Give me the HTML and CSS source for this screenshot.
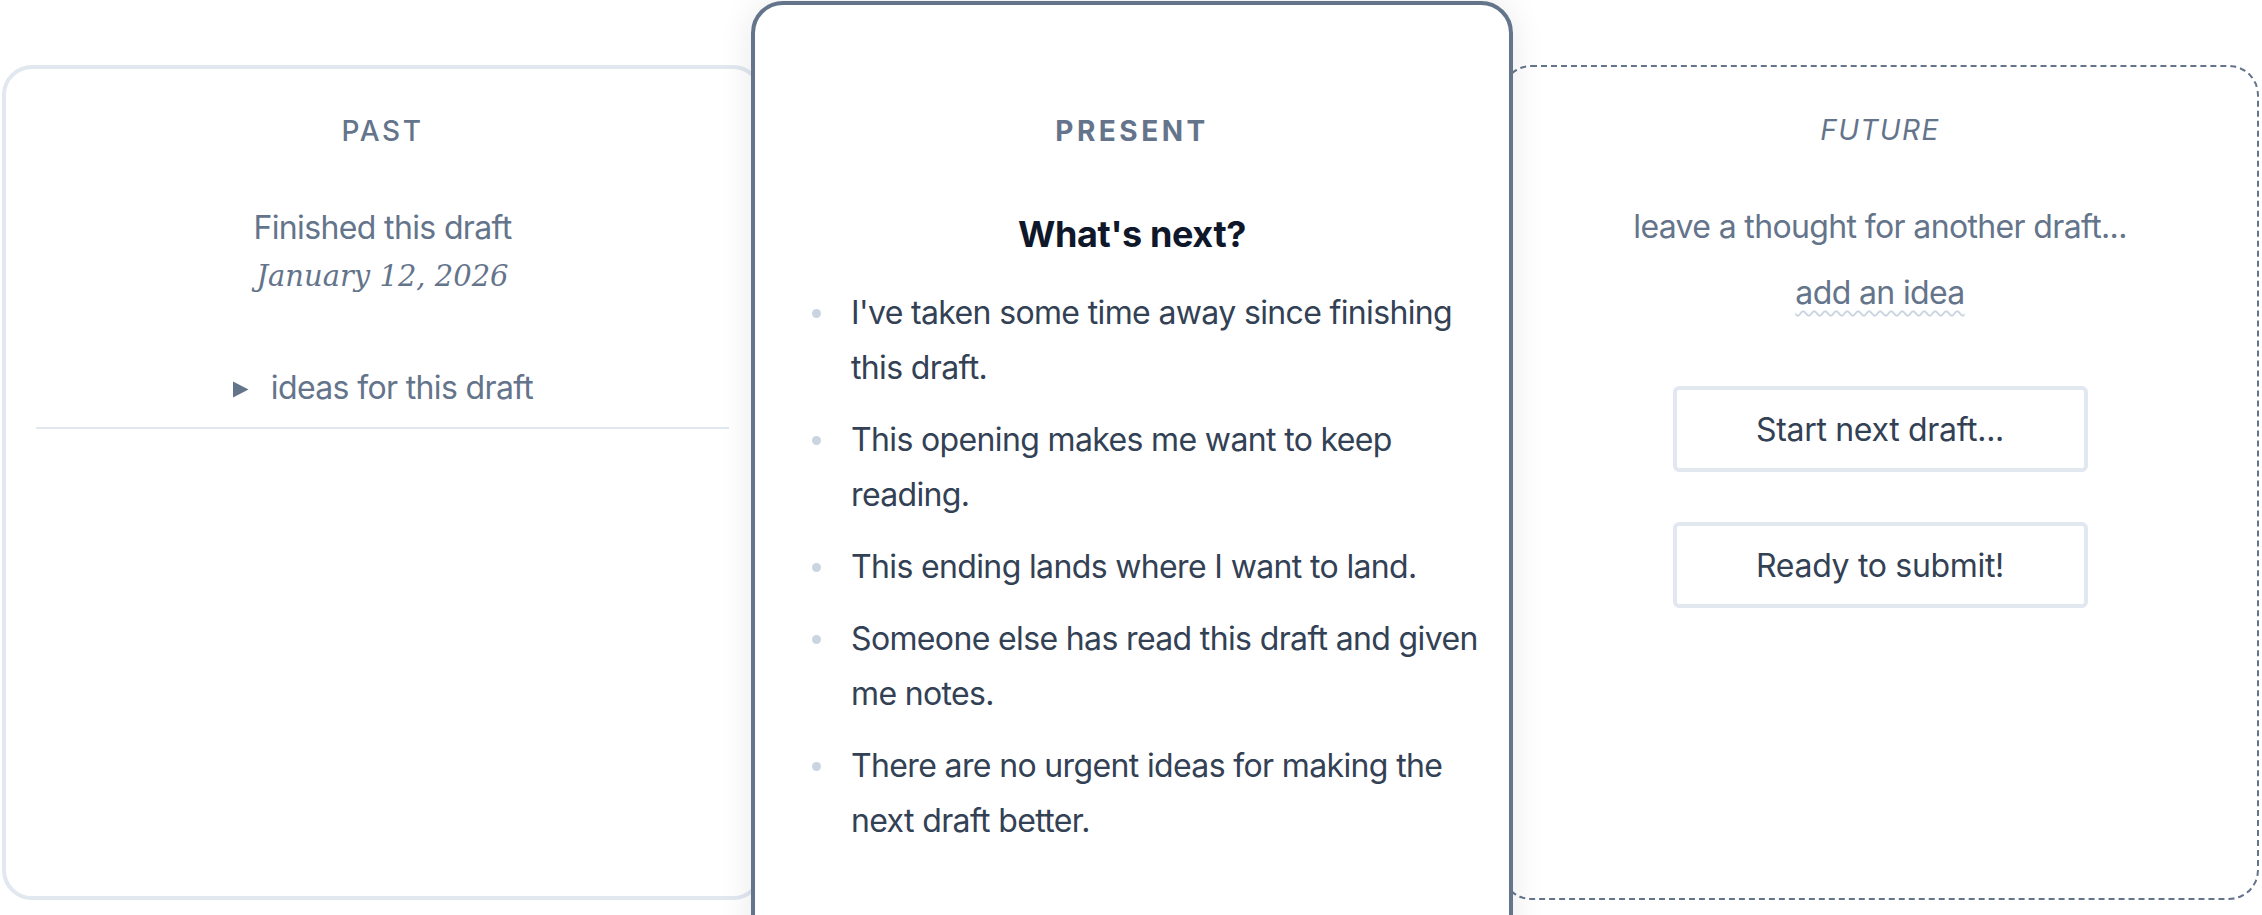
FILE: index.html
```html
<!DOCTYPE html>
<html lang="en">
<head>
<meta charset="utf-8">
<title>Draft timeline</title>
<link rel="stylesheet" href="styles.css">
</head>
<body>
<main class="board">
  <section class="card card-past">
    <h2 class="card-title title-past">PAST</h2>
    <p class="meta">Finished this draft</p>
    <p class="date">January 12, 2026</p>
    <details class="ideas">
      <summary><svg class="tri" width="17" height="17" viewBox="0 0 17 17"><path d="M1 0.5 L16.5 8.5 L1 16.5 Z" fill="#64748b"/></svg><span>ideas for this draft</span></summary>
    </details>
  </section>

  <section class="card card-present">
    <h2 class="card-title title-present">PRESENT</h2>
    <h3 class="next-heading">What's next?</h3>
    <ul class="checklist">
      <li>I've taken some time away since finishing this draft.</li>
      <li>This opening makes me want to keep reading.</li>
      <li>This ending lands where I want to land.</li>
      <li>Someone else has read this draft and given me notes.</li>
      <li>There are no urgent ideas for making the next draft better.</li>
    </ul>
  </section>

  <section class="card card-future">
    <h2 class="card-title title-future">FUTURE</h2>
    <p class="meta">leave a thought for another draft...</p>
    <a class="add-idea" href="#">add an idea</a>
    <div class="actions">
      <button class="btn" type="button">Start next draft...</button>
      <button class="btn" type="button">Ready to submit!</button>
    </div>
  </section>
</main>
</body>
</html>
```

FILE: styles.css
```css
* { box-sizing: border-box; }

html, body {
  margin: 0;
  padding: 0;
  background: #ffffff;
  overflow: hidden;
}

body {
  font-family: Inter, "Noto Sans", "Liberation Sans", sans-serif;
  color: #334155;
  width: 2262px;
  height: 915px;
}

.board {
  display: flex;
  align-items: flex-start;
  padding: 65px 0 0 2px;
}

.card {
  flex: none;
  background: #ffffff;
  text-align: center;
  display: flex;
  flex-direction: column;
  align-items: center;
}

.card-past {
  width: 761px;
  height: 835px;
  border: 4px solid #e2e8f0;
  border-radius: 30px;
  padding: 42px 30px 0;
  align-items: stretch;
}

.card-present {
  position: relative;
  z-index: 2;
  width: 762px;
  margin: -64px -12px 0;
  height: 1000px;
  border: 4px solid #64748b;
  border-radius: 32px;
  padding: 106px 30px 0;
  box-shadow: 0 0 34px rgba(15, 23, 42, 0.09);
  align-items: stretch;
}

.card-future {
  width: 758px;
  height: 835px;
  border: 2px dashed #64748b;
  border-radius: 30px;
  padding: 43px 30px 0;
}

.card-title {
  margin: 0;
  font-size: 28px;
  line-height: 40px;
  color: #64748b;
  letter-spacing: 0.1em;
}

.title-past { font-weight: 500; letter-spacing: 0.09em; }
.title-present { font-weight: 700; letter-spacing: 0.125em; }
.title-future { font-weight: 400; font-style: italic; letter-spacing: 0.05em; }

.meta {
  margin: 53px 0 0;
  font-size: 32px;
  line-height: 48px;
  letter-spacing: -0.02em;
  color: #64748b;
}

.date {
  margin: 0;
  font-family: "DejaVu Serif", "Liberation Serif", serif;
  font-style: italic;
  font-size: 29px;
  line-height: 48px;
  color: #64748b;
}

.ideas {
  margin-top: 64px;
  padding-bottom: 15px;
  border-bottom: 2px solid #e2e8f0;
}

.ideas summary {
  list-style: none;
  display: flex;
  justify-content: center;
  align-items: center;
  gap: 22px;
  font-size: 32px;
  line-height: 48px;
  letter-spacing: -0.02em;
  color: #64748b;
  cursor: pointer;
}

.ideas summary::-webkit-details-marker { display: none; }

.tri { flex: none; margin-top: 2px; }

.next-heading {
  margin: 59px 0 0;
  font-size: 36px;
  line-height: 48px;
  font-weight: 700;
  letter-spacing: -0.01em;
  color: #0f172a;
}

.checklist {
  list-style: none;
  margin: 28px -12px 0 0;
  padding: 0 0 0 27px;
  text-align: left;
}

.checklist li {
  display: flex;
  align-items: flex-start;
  font-size: 32px;
  line-height: 54.8px;
  letter-spacing: -0.02em;
  color: #334155;
  margin-bottom: 17.4px;
}

.checklist li::before {
  content: "";
  flex: none;
  width: 9px;
  height: 9px;
  border-radius: 50%;
  background: #cbd5e1;
  margin-top: 23px;
  margin-right: 30px;
}

.add-idea {
  margin-top: 18px;
  font-size: 32px;
  line-height: 48px;
  letter-spacing: -0.02em;
  color: #64748b;
  text-decoration: underline wavy #cbd5e1;
  text-decoration-thickness: 2px;
  text-underline-offset: 6px;
}

.actions {
  margin-top: 69px;
  display: flex;
  flex-direction: column;
  align-items: center;
  gap: 50px;
}

.btn {
  width: 415px;
  height: 86px;
  border: 4px solid #e2e8f0;
  border-radius: 6px;
  background: #ffffff;
  font-family: inherit;
  font-size: 32px;
  letter-spacing: -0.01em;
  color: #334155;
  padding: 0;
}
```
